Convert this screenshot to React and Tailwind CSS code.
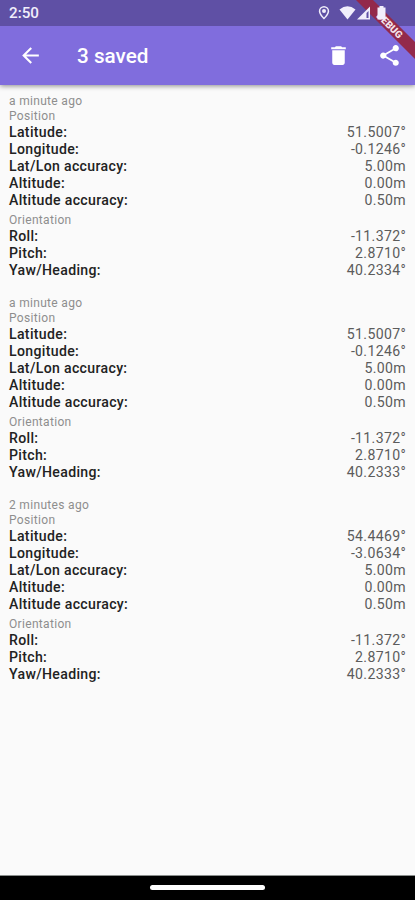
import React from 'react';
import { MdArrowBack, MdShare } from 'react-icons/md';

const entries = [
    {
        time: 'a minute ago',
        position: ['51.5007°', '-0.1246°', '5.00m', '0.00m', '0.50m'],
        orientation: ['-11.372°', '2.8710°', '40.2334°'],
    },
    {
        time: 'a minute ago',
        position: ['51.5007°', '-0.1246°', '5.00m', '0.00m', '0.50m'],
        orientation: ['-11.372°', '2.8710°', '40.2333°'],
    },
    {
        time: '2 minutes ago',
        position: ['54.4469°', '-3.0634°', '5.00m', '0.00m', '0.50m'],
        orientation: ['-11.372°', '2.8710°', '40.2333°'],
    },
];

const positionLabels = ['Latitude:', 'Longitude:', 'Lat/Lon accuracy:', 'Altitude:', 'Altitude accuracy:'];
const orientationLabels = ['Roll:', 'Pitch:', 'Yaw/Heading:'];

const Caption = ({ children }) => (
    <p className="h-[15px] text-[12px] leading-[15px] tracking-[0.32px] text-[#8e8e8e]">{children}</p>
);

const Rows = ({ labels, values }) => (
    <dl>
        {labels.map((label, i) => (
            <div key={label} className="flex h-[17px] justify-between text-[14.1px] leading-[17px] tracking-[0.33px]">
                <dt className="font-medium text-[#222222]">{label}</dt>
                <dd className="text-[#5c5c5c]">{values[i]}</dd>
            </div>
        ))}
    </dl>
);

const StatusBar = () => (
    <div className="relative z-20 flex h-[26px] items-center justify-between pl-[9px] text-[#f1eefb]">
        <span className="pt-[2px] text-[15.2px] font-medium leading-none">2:50</span>
        <svg width="100" height="26" viewBox="315 0 100 26" fill="currentColor">
            <path fillRule="evenodd" d="M324 6a5.200 5.200 0 0 0-5.200 5.200c0 3.500 5.200 8.300 5.200 8.300s5.200-4.800 5.200-8.300a5.200 5.200 0 0 0-5.200-5.200zm0 1.400a3.700 3.700 0 0 1 3.700 3.700c0 2-2.300 5-3.700 6.500-1.400-1.500-3.700-4.500-3.700-6.500a3.700 3.700 0 0 1 3.700-3.700z" />
            <circle cx="324" cy="11" r="2" />
            <path d="M339.500 9.500q8-6.500 16 0l-8 10z" />
            <path d="M370 6.500v13h-13z" />
            <path d="M368.500 11v7h-2v-5z" fill="#5f50a5" />
            <path d="M379.500 6h4v1.500h2v12h-8v-12h2z" />
        </svg>
    </div>
);

const DebugBanner = () => (
    <svg className="absolute right-0 top-0 z-10" width="65" height="65" viewBox="0 0 65 65">
        <path d="M6 0h17l42 42v17z" fill="#93294b" />
        <text
            x="40"
            y="29"
            transform="rotate(45 40 25)"
            textAnchor="middle"
            className="fill-[#f3e3ea] font-black text-[10px]"
        >
            DEBUG
        </text>
    </svg>
);

const App = () => {
    return (
        <div className="relative flex h-[900px] w-[415px] flex-col overflow-hidden bg-[#fafafa] font-['Roboto','Liberation_Sans',sans-serif]">
            <header className="bg-[#806ddd] shadow-[0_1px_5px_rgba(0,0,0,0.45)]">
                <div className="bg-[#5f50a5]">
                    <StatusBar />
                </div>
                <div className="flex h-[59px] items-center pl-[18px] pr-[13px] text-white">
                    <button aria-label="Back">
                        <MdArrowBack size={25} />
                    </button>
                    <h1 className="ml-[34px] flex-1 pt-[2px] text-[20.7px] font-medium">3 saved</h1>
                    <button aria-label="Delete" className="mr-[26px]">
                        <svg width="25" height="25" viewBox="0 0 24 24" fill="currentColor">
                            <path d="M6 19c0 1.100.9 2 2 2h8c1.100 0 2-.9 2-2V7H6v12zM19 4h-3.500l-1-1h-5l-1 1H5v2h14V4z" />
                        </svg>
                    </button>
                    <button aria-label="Share">
                        <MdShare size={25} />
                    </button>
                </div>
            </header>

            <main className="flex-1 px-[9px] pt-[9px]">
                {entries.map((entry, i) => (
                    <section key={i} className="h-[202px]">
                        <Caption>{entry.time}</Caption>
                        <Caption>Position</Caption>
                        <Rows labels={positionLabels} values={entry.position} />
                        <div className="mt-1">
                            <Caption>Orientation</Caption>
                            <Rows labels={orientationLabels} values={entry.orientation} />
                        </div>
                    </section>
                ))}
            </main>

            <footer className="flex h-[25px] items-center justify-center border-t border-[#8a8e8c] bg-black">
                <div className="mb-px h-[5px] w-[115px] rounded-full bg-white" />
            </footer>

            <DebugBanner />
        </div>
    );
};

export default App;
